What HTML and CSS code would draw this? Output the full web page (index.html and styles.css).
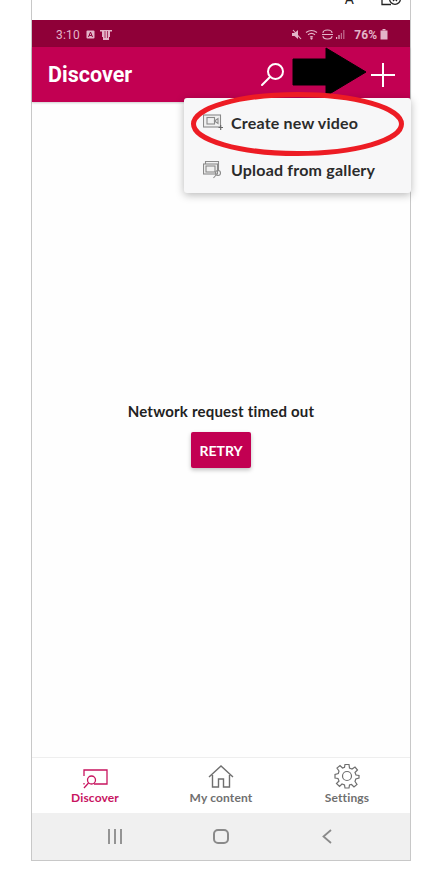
FILE: index.html
```html
<!DOCTYPE html>
<html lang="en">
<head>
<meta charset="utf-8">
<title>Discover</title>
<link rel="stylesheet" href="styles.css">
</head>
<body>
<div class="phone">
  <div class="topgap">
    <span class="top-a">A</span>
    <svg class="top-icon" width="20" height="6" viewBox="0 0 20 6" fill="none" stroke="#222" stroke-width="1.300"><path d="M1 -3V4.500H10"/><circle cx="14" cy="-1" r="5.400"/><path d="M12 -3l4 4M16 -3l-4 4"/></svg>
  </div>
  <div class="statusbar">
    <div class="status-left">
      <span class="time">3:10</span>
      <svg width="9" height="9" viewBox="0 0 9 9"><rect x="0.500" y="0.500" width="8" height="8" rx="1" fill="#e3b4c8"/><path d="M2.500 7L4.500 2L6.500 7M3.200 5.500H5.800" stroke="#8f0038" stroke-width="1" fill="none"/></svg>
      <svg width="12" height="11" viewBox="0 0 12 11"><path d="M0 1H12V2.500H10V8H9V11H3V8H2V2.500H0Z" fill="#e3b4c8"/><path d="M5 2V9M7.500 2V9" stroke="#8f0038" stroke-width=".7"/></svg>
    </div>
    <div class="status-right">
      <svg width="10" height="11" viewBox="0 0 10 11" fill="#e3b4c8"><path d="M0 4H2.500L6 1V10L2.500 7H0Z"/><path d="M1 1L9 10" stroke="#e3b4c8" stroke-width="1.100"/></svg>
      <svg width="14" height="11" viewBox="0 0 14 11" fill="none" stroke="#e3b4c8" stroke-width="1.100"><path d="M1 3.500Q6.500 -.5 12 3.500M3 5.800Q6.500 3 10 5.800M5 8Q6.500 7 8 8"/><circle cx="6.500" cy="9.500" r=".6" fill="#e3b4c8"/></svg>
      <svg width="11" height="11" viewBox="0 0 11 11" fill="none" stroke="#e3b4c8" stroke-width="1.100"><path d="M1 4Q1 1 5.500 1T10 4M1 7Q1 10 5.500 10T10 7M0 5.500H11"/></svg>
      <svg width="9" height="9" viewBox="0 0 9 9" fill="#e3b4c8"><rect x="0" y="7" width="1.200" height="2"/><rect x="2.400" y="5" width="1.200" height="4"/><rect x="4.800" y="3" width="1.200" height="6" opacity=".6"/><rect x="7.200" y="0" width="1.200" height="9" opacity=".6"/></svg>
      <span class="battery-text">76%</span>
      <svg width="8" height="11" viewBox="0 0 8 11" fill="#e3b4c8"><rect x="2.500" y="0" width="3" height="1.500"/><rect x="0.500" y="1.500" width="7" height="9"/></svg>
    </div>
  </div>
  <header class="appbar">
    <h1 class="title">Discover</h1>
    <div class="actions">
      <svg class="search-icon" width="26" height="28" viewBox="0 0 26 28" fill="none" stroke="#fff" stroke-width="2"><circle cx="15.500" cy="10.500" r="7.500"/><path d="M10 16L2 24" stroke-linecap="round"/></svg>
      <svg class="plus-icon" width="24" height="24" viewBox="0 0 24 24" stroke="#fff" stroke-width="2"><path d="M0 12H24M12 0V24"/></svg>
    </div>
  </header>
  <main class="content">
    <p class="message">Network request timed out</p>
    <button class="retry">RETRY</button>
  </main>
  <nav class="tabs">
    <div class="tab tab-active">
      <svg width="26" height="20" viewBox="0 0 26 20" fill="none" stroke="#c8145f" stroke-width="1.300"><path d="M2 7V1H25V15H12"/><path d="M2 14V15.500"/><circle cx="9.500" cy="11" r="4"/><path d="M6.500 14L2 19"/></svg>
      <span>Discover</span>
    </div>
    <div class="tab">
      <svg width="26" height="24" viewBox="0 0 26 24" fill="none" stroke="#6f6f6f" stroke-width="1.400"><path d="M1 12L13 1L25 12M4.500 10V22H10.500V14H15.500V22H21.500V10"/></svg>
      <span>My content</span>
    </div>
    <div class="tab">
      <svg width="26" height="26" viewBox="0 0 26 26" fill="none" stroke="#6f6f6f" stroke-width="1.200"><circle cx="13" cy="13" r="4.500"/><path d="M11 1.500H15L15.500 5L18 6L21 4L23.500 7L21 9.500L22 12L25 12.500V15L21.800 16L21 18.500L23 21.500L20 24L17.500 21.500L15.500 22L15 25H11L10.500 22L8 21L5.500 23.500L2.500 20.500L5 18L4 15.500L1 15V11.500L4.300 10.500L5 8L3 5L6 2.500L8.500 5L10.500 4.300Z"/></svg>
      <span>Settings</span>
    </div>
  </nav>
  <div class="sysnav">
    <svg width="16" height="15" viewBox="0 0 16 15" stroke="#8a8a8a" stroke-width="1.800"><path d="M2 0V15M8 0V15M14 0V15"/></svg>
    <svg width="16" height="15" viewBox="0 0 16 15" fill="none" stroke="#8a8a8a" stroke-width="2"><rect x="1" y="1" width="14" height="13" rx="4"/></svg>
    <svg width="10" height="15" viewBox="0 0 10 15" fill="none" stroke="#8a8a8a" stroke-width="1.800"><path d="M9 1L1.500 7.500L9 14"/></svg>
  </div>

  <div class="menu">
    <div class="menu-item">
      <svg width="20" height="17" viewBox="0 0 20 17" fill="none" stroke="#8a8a8a" stroke-width="1.100"><rect x="0.500" y="1" width="17" height="12" fill="#f0f0f0"/><rect x="4" y="3.500" width="7.500" height="6.500"/><path d="M11.500 7L15 4.500V9.500L11.500 7Z"/><path d="M15.500 13.500H20M17.700 11V16" stroke="#666"/></svg>
      <span>Create new video</span>
    </div>
    <div class="menu-item">
      <svg width="20" height="18" viewBox="0 0 20 18" fill="none" stroke="#8a8a8a" stroke-width="1.100"><rect x="2.500" y="0.500" width="13" height="9"/><rect x="0.500" y="3" width="14" height="10" fill="#f0f0f0"/><rect x="3" y="5" width="9" height="6"/><circle cx="15" cy="12" r="2.500"/><path d="M13 14L10.500 17"/></svg>
      <span>Upload from gallery</span>
    </div>
  </div>

  <svg class="annotation" width="437" height="875" viewBox="0 0 437 875">
    <path d="M293 59H326V48L366 72L326 96V85H293Z" fill="#000" stroke="#000" stroke-linejoin="round"/>
    <ellipse cx="297.500" cy="124" rx="104" ry="29.500" fill="none" stroke="#ed1c24" stroke-width="5"/>
  </svg>
</div>
</body>
</html>
```

FILE: styles.css
```css
* { box-sizing: border-box; }
html, body { margin: 0; padding: 0; background: #fff; overflow: hidden; }
body { width: 437px; height: 875px; font-family: "Lato", "Noto Sans", sans-serif; }
.phone {
  position: relative;
  width: 380px;
  height: 861px;
  margin-left: 31px;
  border-left: 1px solid #c8c8c8;
  border-right: 1px solid #c8c8c8;
  border-bottom: 1px solid #c8c8c8;
  display: flex;
  flex-direction: column;
}
.topgap { height: 20px; display: flex; justify-content: flex-end; align-items: flex-start; padding-right: 9px; gap: 27px; overflow: hidden; flex: none; }
.top-a { font: 14px/14px "Roboto", sans-serif; color: #222; margin-top: -8px; }
.top-icon { display: block; }
.statusbar { height: 27px; flex: none; background: #8f0038; display: flex; justify-content: space-between; align-items: center; padding: 2px 22px 0 24px; color: #e3b4c8; }
.status-left, .status-right { display: flex; align-items: center; gap: 3px; }
.status-left { gap: 5px; }
.time { font: 12px "Roboto", sans-serif; letter-spacing: .2px; margin-right: 1px; }
.battery-text { font: 700 12px "Roboto", sans-serif; margin-left: 6px; }
.appbar { height: 55px; flex: none; background: #c20052; display: flex; align-items: center; justify-content: space-between; padding: 0 15px 0 16px; box-shadow: 0 1px 2px rgba(0,0,0,.2); z-index: 1; }
.title { margin: 0; font: 700 21.500px "Roboto", sans-serif; color: #fff; }
.actions { display: flex; align-items: center; gap: 85px; }
.search-icon { margin-top: 1px; }
.plus-icon { margin-top: 1px; }
.content { flex: 1; background: #fefefe; display: flex; flex-direction: column; align-items: center; padding-top: 299px; }
.message { margin: 0; font: 700 15px/20px "Lato", sans-serif; letter-spacing: .2px; color: #222; }
.retry { margin-top: 11px; width: 60px; height: 36px; border: 0; border-radius: 2px; background: #c20052; color: #fff; font: 700 14px "Lato", sans-serif; box-shadow: 0 2px 4px rgba(0,0,0,.25); padding: 0; }
.tabs { height: 56px; flex: none; background: #fff; border-top: 1px solid #eee; display: grid; grid-template-columns: repeat(3, 1fr); }
.tab { display: flex; flex-direction: column; align-items: center; justify-content: flex-end; gap: 2px; padding-bottom: 8px; font: 700 12px/14px "Lato", sans-serif; letter-spacing: .15px; color: #6f6f6f; }
.tab-active { color: #c8145f; }
.sysnav { height: 47px; flex: none; background: #f0f0f0; display: grid; grid-template-columns: repeat(3, 106px); justify-content: center; justify-items: center; align-items: center; }
.menu { position: absolute; left: 152px; top: 98px; width: 227px; height: 95px; background: #f7f7f8; border-radius: 3px; box-shadow: 0 2px 8px rgba(0,0,0,.28); padding: 1px 0 0 19px; z-index: 2; display: flex; flex-direction: column; }
.menu-item { height: 47px; display: flex; align-items: center; gap: 8px; font: 700 16px "Lato", sans-serif; letter-spacing: .2px; color: #2b2b2b; }
.annotation { position: absolute; left: -32px; top: 0; z-index: 3; pointer-events: none; }
```
